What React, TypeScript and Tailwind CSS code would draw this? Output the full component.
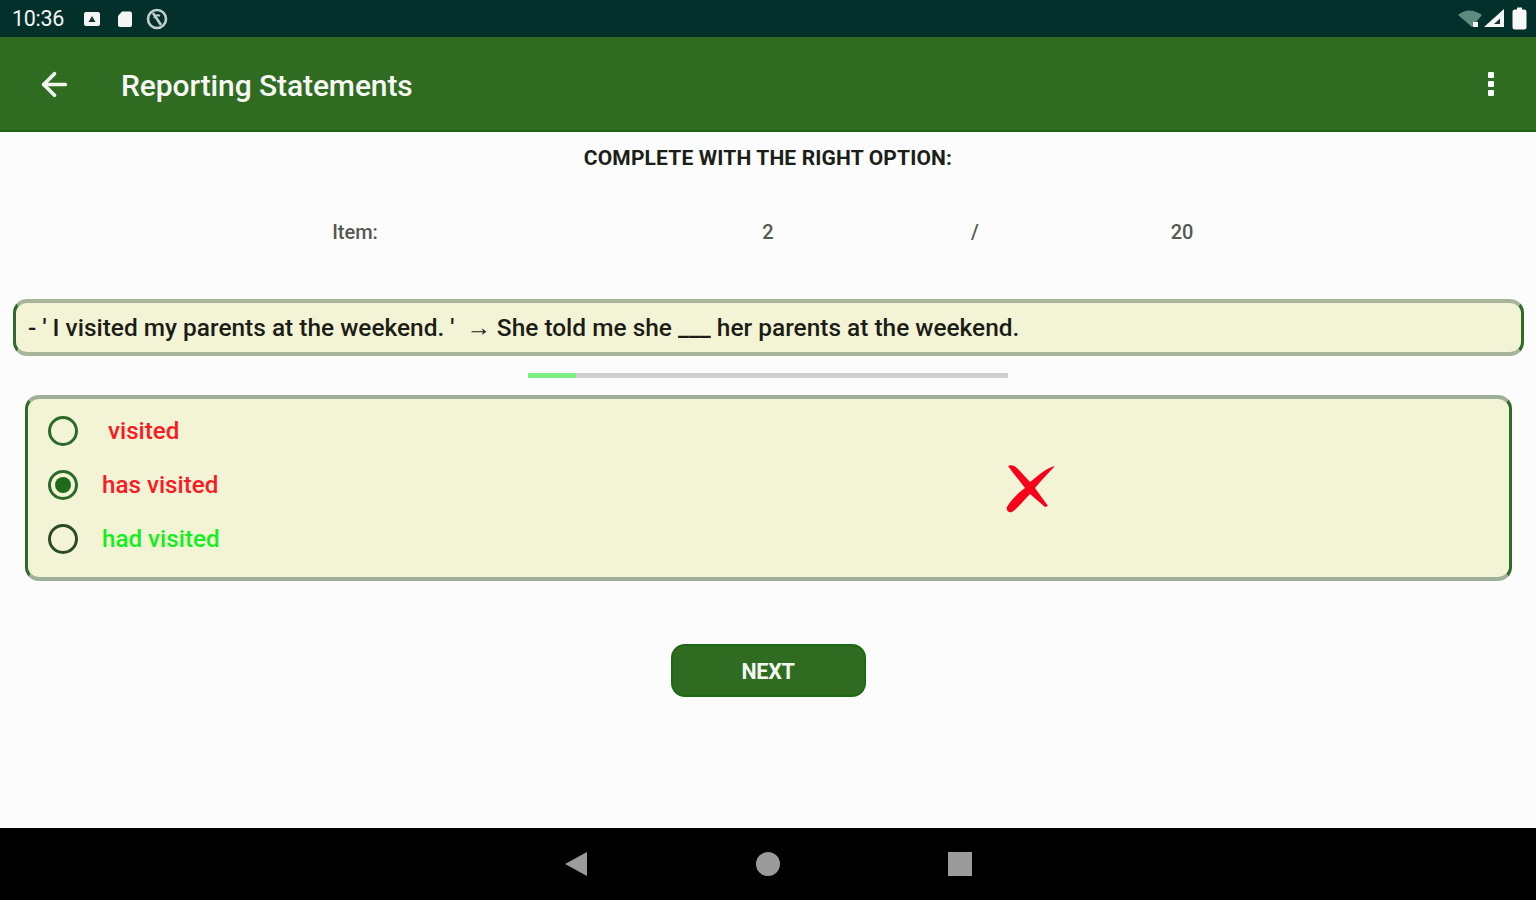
import { ArrowLeft } from 'lucide-react'

const OPTIONS = [
  { label: 'visited', color: 'text-[#fb1a24]', checked: false, pad: 'ml-[30px]', ring: 'border-[#2b6b2a]' },
  { label: 'has visited', color: 'text-[#fb1a24]', checked: true, pad: 'ml-[24px]', ring: 'border-[#2b6b2a]' },
  { label: 'had visited', color: 'text-[#12f01c]', checked: false, pad: 'ml-[24px]', ring: 'border-[#2a4a2a]' },
]

function StatusBar() {
  return (
    <div className="flex h-[37px] items-center justify-between bg-[#03302a] pl-3 pr-[9px] text-white">
      <div className="flex items-center">
        <span className="w-[52px] text-[21.5px] leading-none tracking-[-0.3px] text-[#f2f5f3]">10:36</span>
        <svg width="18" height="18" viewBox="0 0 18 18" className="ml-[19px]">
          <rect x="1" y="2" width="16" height="14" rx="2" fill="#f4f6f5" />
          <path d="M5.5 12 L9 6 L12.5 12 Z" fill="#17352f" />
        </svg>
        <svg width="18" height="18" viewBox="0 0 18 18" className="ml-[15px]">
          <path d="M6 1.5 H14 a2 2 0 0 1 2 2 V15 a2 2 0 0 1 -2 2 H4 a2 2 0 0 1 -2 -2 V6 Z" fill="#f4f6f5" />
        </svg>
        <svg width="24" height="24" viewBox="0 0 24 24" className="ml-[11px]">
          <circle cx="12" cy="12" r="9" fill="none" stroke="#c4cfcb" strokeWidth="2.6" />
          <path d="M8 6 L16 18" stroke="#c4cfcb" strokeWidth="2.6" />
          <path d="M9 11 a4 4 0 0 1 6 -2" fill="none" stroke="#c4cfcb" strokeWidth="2" />
        </svg>
      </div>
      <div className="flex items-center">
        <svg width="26" height="20" viewBox="0 0 26 20">
          <path d="M0 6 Q11 -3 24 6 L14 18 Z" fill="#5f8a7f" />
          <rect x="15" y="13" width="5" height="5" fill="#f4f6f5" />
        </svg>
        <svg width="22" height="20" viewBox="0 0 22 20" className="ml-[-1px]">
          <path d="M1 18 L21 0 V18 Z" fill="#f4f6f5" />
          <path d="M11 15 L17 9.5 V15 Z" fill="#17352f" />
        </svg>
        <svg width="15" height="23" viewBox="0 0 15 23" className="ml-[7px]">
          <path d="M5 0.5 H10 V2.5 H12 a2.5 2.5 0 0 1 2.5 2.5 V20 a2.5 2.5 0 0 1 -2.5 2.5 H3 a2.5 2.5 0 0 1 -2.5 -2.5 V5 a2.5 2.5 0 0 1 2.5 -2.5 H5 Z" fill="#f8faf9" />
        </svg>
      </div>
    </div>
  )
}

function AppBar() {
  return (
    <header className="flex h-[95px] items-center border-b-2 border-[#1c6410] bg-[#306b22] pl-[36px] pr-[42px] text-white">
      <ArrowLeft size={37} strokeWidth={2.4} className="mt-[2px] text-[#f1f5ee]" />
      <h1 className="ml-[48px] mt-[4px] text-[30px] font-medium leading-none tracking-[-0.1px] text-[#f6f8f3]">Reporting Statements</h1>
      <div className="ml-auto flex flex-col gap-[3px]">
        <span className="h-[6px] w-[6px] rounded-[1px] bg-white" />
        <span className="h-[6px] w-[6px] rounded-[1px] bg-white" />
        <span className="h-[6px] w-[6px] rounded-[1px] bg-white" />
      </div>
    </header>
  )
}

function ItemCounter() {
  return (
    <div className="mt-[48px] grid grid-cols-[710px_116px_298px_116px] text-center text-[20px] font-medium leading-[24px] text-[#55594f]">
      <span>Item:</span>
      <span>2</span>
      <span>/</span>
      <span>20</span>
    </div>
  )
}

function Radio({ checked, ring }: { checked: boolean; ring: string }) {
  return (
    <span className={`flex h-[30px] w-[30px] shrink-0 items-center justify-center rounded-full border-[3px] ${ring}`}>
      {checked && <span className="h-[16px] w-[16px] rounded-full bg-[#1f6b1c]" />}
    </span>
  )
}

export default function App() {
  return (
    <div className="flex h-[900px] flex-col overflow-hidden bg-[#fcfcfc] font-['Roboto',sans-serif]">
      <StatusBar />
      <AppBar />
      <main className="flex flex-1 flex-col">
        <h2 className="mt-[12px] text-center text-[21px] font-bold leading-[28px] tracking-[0.15px] text-[#1a1f18]">COMPLETE WITH THE RIGHT OPTION:</h2>
        <ItemCounter />

        <div className="ml-[13px] mr-[12px] mt-[55px] flex h-[57px] items-center rounded-[14px] border-x-[3px] border-t-[4px] border-b-[4px] border-x-[#2f6b25] border-t-[#a9b59b] border-b-[#a9b59b] bg-[#f3f4d5] pl-[12px] pt-[2px] text-[24.45px] font-medium leading-none text-[#1b1d16]">
          <p className="whitespace-pre">- ' I visited my parents at the weekend. '<span className="ml-[12px] mr-[6px]">→</span>She told me she ___ her parents at the weekend.</p>
        </div>

        <div className="mx-auto mt-[17px] flex h-[5px] w-[480px] bg-[#cfcfcf]">
          <div className="h-full w-[48px] bg-[#7ded82]" />
        </div>

        <div className="ml-[25px] mr-[24px] mt-[17px] flex h-[186px] items-center rounded-[14px] border-x-[3px] border-t-[4px] border-b-[4px] border-x-[#2f6b25] border-t-[#9fb096] border-b-[#9fb096] bg-[#f3f4d5] pl-[20px]">
          <div className="mb-[6px] flex w-[958px] flex-col gap-[24px]">
            {OPTIONS.map((o) => (
              <label key={o.label} className="flex h-[30px] items-center">
                <Radio checked={o.checked} ring={o.ring} />
                <span className={`${o.pad} text-[24.2px] font-medium leading-none ${o.color}`}>{o.label}</span>
              </label>
            ))}
          </div>
          <svg width="50" height="50" viewBox="0 0 50 50" className="mb-[1px]">
            <path d="M2 3 C6 1 9 3 12 6 L24 19 C32 13 40 5 49 3 C42 10 35 18 29 25 L42 43 L39 44 L24 31 C17 38 12 45 6 49 C2 50 0 47 1 44 C5 37 12 30 19 25 C13 17 7 10 2 3 Z" fill="#f8001c" />
          </svg>
        </div>

        <button type="button" className="mx-auto mt-[63px] h-[53px] w-[195px] rounded-[14px] border-2 border-[#1c6a12] bg-[#306b22] pt-[3px] text-[21.5px] font-bold tracking-[-0.3px] text-[#f3f6f0]">
          NEXT
        </button>
      </main>
      <nav className="flex h-[72px] items-center justify-center bg-black">
        <svg width="24" height="26" viewBox="0 0 24 26">
          <path d="M23 1 V25 L1 13 Z" fill="#9b9b9b" />
        </svg>
        <span className="ml-[168px] h-[24px] w-[24px] rounded-full bg-[#9b9b9b]" />
        <span className="ml-[168px] h-[24px] w-[24px] bg-[#9b9b9b]" />
      </nav>
    </div>
  )
}
